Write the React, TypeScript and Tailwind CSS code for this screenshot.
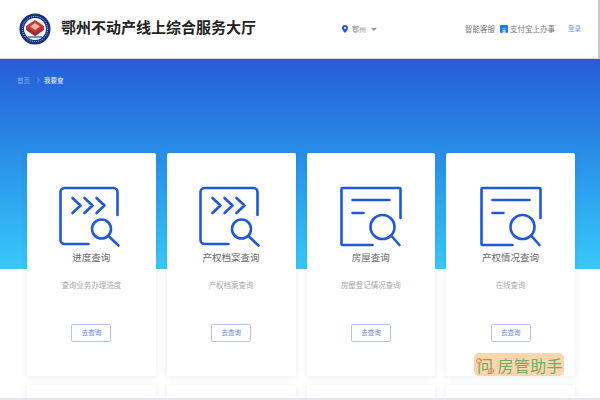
import React from "react";

const Progress = () => (
  <svg width="64" height="64" viewBox="0 0 64 64" fill="none" stroke="#2158d8" strokeWidth="2.6" strokeLinecap="round" strokeLinejoin="round">
    <path d="M58.5 31V8a4 4 0 0 0-4-4H5.5a4 4 0 0 0-4 4v48a4 4 0 0 0 4 4h24" />
    <path d="M13.5 14l8 7.5-8 7.5M25.5 14l8 7.5-8 7.5M37.5 14l8 7.5-8 7.5" />
    <circle cx="42.5" cy="45" r="9.5" />
    <path d="M50.5 53l9 8.5" />
  </svg>
);

const Doc = () => (
  <svg width="64" height="64" viewBox="0 0 64 64" fill="none" stroke="#2158d8" strokeWidth="2.6" strokeLinecap="round" strokeLinejoin="round">
    <path d="M61.5 34V5a1 1 0 0 0-1-1H3.5a1 1 0 0 0-1 1v55a1 1 0 0 0 1 1h30" />
    <path d="M13.5 16h37M13.5 29h11" />
    <circle cx="43.5" cy="43" r="12" />
    <path d="M52.5 52l8 9" />
  </svg>
);

const Logo = () => (
  <svg width="32" height="32" viewBox="0 0 32 32">
    <circle cx="16" cy="16" r="15.5" fill="#14307f" />
    <circle cx="16" cy="16" r="12.6" fill="none" stroke="#ffffff" strokeWidth="0.8" strokeDasharray="1 1.2" />
    <circle cx="16" cy="16" r="11" fill="#ffffff" />
    <path d="M16 7l9 6v4l-9 6-9-6v-4z" fill="#c23a3a" />
    <path d="M16 10l5 3.5-5 3.5-5-3.5z" fill="#e8b7a8" />
    <path d="M16 20l7-5v3l-7 5-7-5v-3z" fill="#9c2a33" />
    <path d="M9 24h14" stroke="#2d6fb5" strokeWidth="1.4" />
  </svg>
);

const cards = [
  { title: "进度查询", sub: "查询业务办理进度", Icon: Progress },
  { title: "产权档案查询", sub: "产权档案查询", Icon: Progress },
  { title: "房屋查询", sub: "房屋登记情况查询", Icon: Doc },
  { title: "产权情况查询", sub: "在线查询", Icon: Doc },
];

export default function App() {
  return (
    <div
      className="relative h-[400px] w-[600px] overflow-hidden bg-white text-[#333]"
      style={{ fontFamily: '"Noto Sans CJK SC", "Liberation Sans", sans-serif' }}
    >
      <header className="flex h-[59px] items-center border-b border-r-2 border-b-[#d5d9e4] border-r-[#c8c8c8] bg-white pl-[19px]">
        <Logo />
        <h1 className="ml-[10px] w-[281px] pb-[5px] text-[15px] font-bold leading-none text-[#222]">鄂州不动产线上综合服务大厅</h1>
        <div className="flex items-center text-[7px] text-[#888]">
          <svg width="6" height="8" viewBox="0 0 6 8" className="mr-[4px]">
            <path d="M3 0a3 3 0 0 1 3 3c0 2-3 5-3 5S0 5 0 3a3 3 0 0 1 3-3z" fill="#2158d8" />
            <circle cx="3" cy="3" r="1.1" fill="#fff" />
          </svg>
          鄂州
          <span className="ml-[5px] h-0 w-0 border-x-[3px] border-t-[3px] border-x-transparent border-t-[#999]" />
        </div>
        <span className="ml-[88px] text-[7.5px] text-[#777]">智能客服</span>
        <span className="ml-[5px] flex h-[8px] w-[8px] items-center justify-center rounded-[1px] bg-[#1677ff] text-[5px] leading-none text-white">支</span>
        <span className="ml-[2px] text-[7.5px] text-[#777]">支付宝上办事</span>
        <span className="ml-[13px] text-[6.5px] text-[#7d9be4]">登录</span>
      </header>

      <section className="h-[210px] bg-gradient-to-b from-[#275bd8] to-[#39c9f9] pl-[17px] pt-[15px]">
        <div className="flex items-center text-[6.5px] leading-[12px]">
          <span className="text-[#8aa9ea]">首页</span>
          <svg width="5" height="6" viewBox="0 0 5 6" className="ml-[6px] mr-[3px]" fill="none" stroke="#8aa9ea" strokeWidth="0.7">
            <path d="M1 0.5L3.5 3 1 5.5" />
          </svg>
          <span className="font-medium text-[#dfe8fa]">我要查</span>
        </div>
      </section>

      <main className="-mt-[116px] grid grid-cols-4 gap-x-[11px] gap-y-[9px] pl-[27px] pr-[25px]">
        {cards.map(({ title, sub, Icon }) => (
          <div key={title} className="flex h-[223px] flex-col items-center rounded-[2px] bg-white pt-[31px] shadow-[0_1px_6px_rgba(40,60,110,0.1)]">
            <Icon />
            <div className="mt-[2px] text-[9.5px] leading-[14px] text-[#666]">{title}</div>
            <div className="mt-[15px] text-[7.5px] leading-[12px] text-[#a8a8a8]">{sub}</div>
            <button className="mt-[33px] flex h-[18px] w-[40px] items-center justify-center rounded-[2px] border border-[#b4c5f2] bg-white text-[6.5px] text-[#5f82dc]">去查询</button>
          </div>
        ))}
        {cards.map(({ title }) => (
          <div key={title + "2"} className="h-[223px] rounded-[2px] bg-white shadow-[0_1px_6px_rgba(40,60,110,0.1)]" />
        ))}
      </main>

      <div className="absolute bottom-0 left-0 h-[2px] w-full bg-[#e3e7f3]" />

      <div className="absolute left-[474px] top-[353px] flex h-[23px] w-[90px] items-center rounded-[5px] bg-[#fdd5ae] pl-[3px] text-[16px] leading-none tracking-[0.4px] text-[#6fae62]">
        <span className="relative mr-[4px]">
          问
          <span className="absolute -left-[1px] top-[1px] h-[6px] w-[6px] rounded-full border border-[#f47f5f]" />
          <span className="absolute -bottom-[1px] -right-[1px] h-[6px] w-[6px] rounded-full border border-[#f47f5f]" />
        </span>
        房管助手
      </div>
    </div>
  );
}
